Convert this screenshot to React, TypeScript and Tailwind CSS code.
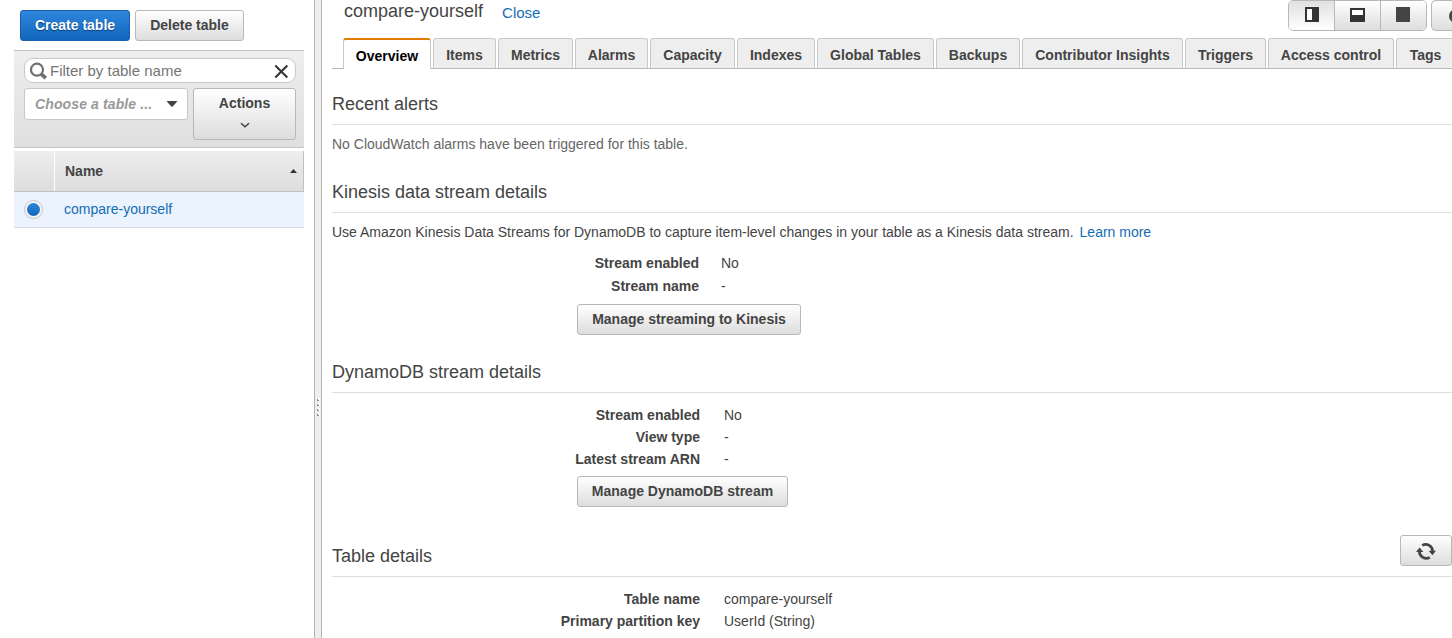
import React from 'react';

const tabs: [string, string][] = [
  ['Items', 'w-[63px]'],
  ['Metrics', 'w-[75px]'],
  ['Alarms', 'w-[73px]'],
  ['Capacity', 'w-[85px]'],
  ['Indexes', 'w-[78px]'],
  ['Global Tables', 'w-[117px]'],
  ['Backups', 'w-[84px]'],
  ['Contributor Insights', 'w-[161px]'],
  ['Triggers', 'w-[81px]'],
  ['Access control', 'w-[126px]'],
  ['Tags', 'w-[59px]'],
];

const buttonLook =
  'rounded-[3px] border border-[#b8b8b8] bg-linear-to-b from-white to-[#dddddd] font-bold text-[#444]';

function Button({ children, className }: { children: React.ReactNode; className: string }) {
  return (
    <button className={`${buttonLook} flex shrink-0 items-center justify-center whitespace-nowrap ${className}`}>
      {children}
    </button>
  );
}

function Sidebar() {
  return (
    <aside className="w-[314px] shrink-0 pl-[14px] pt-[10px]">
      <div className="flex gap-[5px] pl-[6px]">
        <button className="flex h-[31px] w-[110px] items-center justify-center rounded-[3px] border border-[#1a5fae] bg-linear-to-b from-[#2e87dd] to-[#1166bb] pb-[2px] font-bold text-white [text-shadow:0_1px_1px_#0a3c78]">
          Create table
        </button>
        <Button className="h-[31px] w-[109px] pb-[2px]">Delete table</Button>
      </div>

      <div className="mt-[9px] h-[98px] w-[290px] border-y border-[#c4c4c4] bg-linear-to-b from-[#eeeeee] to-[#dfdfdf] px-[10px] pt-[7px]">
        <div className="flex h-[25px] w-[272px] items-center rounded-[9px] border border-[#c8c8c8] bg-white pl-[5px] pr-[6px]">
          <svg width="18" height="18" viewBox="0 0 18 18" fill="none" stroke="#707070">
            <circle cx="7" cy="7.7" r="6" strokeWidth="2.2" />
            <path d="M11 11.8 15.8 16.2" strokeWidth="3.6" />
          </svg>
          <span className="ml-[2px] flex-1 text-[15px] text-[#757575]">Filter by table name</span>
          <svg width="16" height="16" viewBox="0 0 16 16" fill="none" stroke="#333" strokeWidth="2">
            <path d="M2.3 2.5 14.3 14.5M14.3 2.5 2.3 14.5" />
          </svg>
        </div>
        <div className="mt-[5px] flex w-[272px] justify-between">
          <div className="flex h-[32px] w-[164px] items-center justify-between rounded-[3px] border border-[#c8c8c8] bg-white pl-[10px] pr-[9px] font-bold italic text-[#999]">
            <span className="tracking-[0.12px]">Choose a table ...</span>
            <svg width="12" height="6" viewBox="0 0 12 6" fill="#444">
              <path d="M.5 0h11L7 5.2q-1 .9-2 0z" />
            </svg>
          </div>
          <Button className="h-[52px] w-[103px] flex-col pb-[4px]">
            <span className="leading-[20px]">Actions</span>
            <svg className="mt-[6px]" width="12" height="12" viewBox="0 0 12 12" fill="none" stroke="#444" strokeWidth="1.5">
              <path d="M2 4.2 6 7.8 10 4.2" />
            </svg>
          </Button>
        </div>
      </div>

      <div className="mt-[3px] flex h-[41px] w-[290px] border-b border-r border-[#c0c0c0] bg-linear-to-b from-[#eeeeee] to-[#dddddd] font-bold text-[#444]">
        <div className="w-[41px] border-r border-white" />
        <div className="flex flex-1 items-center justify-between pl-[10px] pr-[6px]">
          <span>Name</span>
          <svg width="7" height="4" viewBox="0 0 7 4" fill="#333">
            <path d="M0 4 3.5 0 7 4z" />
          </svg>
        </div>
      </div>
      <div className="flex h-[36px] w-[290px] items-center border-b border-[#d5dbe2] bg-[#eaf3fe] pl-[10px]">
        <span className="flex size-[19px] items-center justify-center rounded-full border border-[#c8c8c8] bg-[#f5f5f5]">
          <span className="size-[13px] rounded-full bg-linear-to-b from-[#2e87dd] to-[#1166bb]" />
        </span>
        <a className="ml-[21px] pb-[2px] text-[#146eb4]">compare-yourself</a>
      </div>
    </aside>
  );
}

function Grip() {
  return (
    <div className="h-full w-[8px] shrink-0 border-x border-[#b4b4b4] bg-[#eeeeee] pt-[397px]">
      <svg width="6" height="22" viewBox="0 0 6 22" shapeRendering="crispEdges">
        {[0, 5, 10, 15].map((y) => (
          <g key={y}>
            <path d={`M3 ${y + 1}h2v3h-2z`} fill="#fff" />
            <path d={`M2 ${y + 2}h1v1h1v1h-2z`} fill="#888" />
          </g>
        ))}
      </svg>
    </div>
  );
}

function Heading({ children }: { children: React.ReactNode }) {
  return (
    <h2 className="h-[33px] border-b border-[#dddddd] text-[18px] leading-[24px] text-[#444]">{children}</h2>
  );
}

function Details({ rows, className, row }: { rows: [string, string][]; className: string; row: string }) {
  return (
    <dl className={className}>
      {rows.map(([label, value]) => (
        <div key={label} className={`grid ${row}`}>
          <dt className="text-right font-bold">{label}</dt>
          <dd>{value}</dd>
        </div>
      ))}
    </dl>
  );
}

const segment = 'flex items-center justify-center border-r border-[#b8b8b8] pb-[2px]';

function Header() {
  return (
    <header className="flex h-[38px] justify-between">
      <div className="flex pl-[12px]">
        <h1 className="text-[18px] leading-[22px] text-[#444]">compare-yourself</h1>
        <a className="ml-[19px] text-[15px] leading-[25px] text-[#146eb4]">Close</a>
      </div>
      <div className="flex h-[31px] gap-[4px]">
        <div className="flex w-[139px] overflow-hidden rounded-[5px] border border-[#b8b8b8]">
          <div className={`${segment} w-[46px] bg-linear-to-b from-[#e0e0e0] to-white`}>
            <svg width="14" height="15" viewBox="0 0 14 15" shapeRendering="crispEdges">
              <path d="M0 0h14v15H0z" fill="#333" />
              <path d="M2 2h5v11H2z" fill="#fff" />
            </svg>
          </div>
          <div className={`${segment} w-[46px] bg-linear-to-b from-white to-[#dddddd]`}>
            <svg width="15" height="14" viewBox="0 0 15 14" shapeRendering="crispEdges">
              <path d="M0 0h15v14H0z" fill="#333" />
              <path d="M2 2h11v5H2z" fill="#fff" />
            </svg>
          </div>
          <div className="flex flex-1 items-center justify-center bg-linear-to-b from-white to-[#dddddd] pb-[2px] pr-[2px]">
            <svg width="14" height="15" viewBox="0 0 14 15">
              <path d="M0 0h14v15H0z" fill="#444" />
            </svg>
          </div>
        </div>
        <div className="flex w-[21px] items-center overflow-hidden rounded-l-[5px] border border-r-0 border-[#b8b8b8] bg-linear-to-b from-white to-[#dddddd] pl-[17px]">
          <svg className="shrink-0" width="14" height="14" viewBox="0 0 14 14">
            <circle cx="7" cy="7" r="7" fill="#444" />
          </svg>
        </div>
      </div>
    </header>
  );
}

function Refresh() {
  return (
    <svg width="20" height="18" viewBox="0 0 20 18" fill="none" stroke="#444" strokeWidth="2.7">
      <path d="M6.2 3.4A6.9 6.9 0 0 1 16.6 9.5" />
      <path d="M13.8 15.4A6.9 6.9 0 0 1 3.4 9.3" />
      <path d="M12.6 8.8H20l-3.6 4.4zM0 10h7.4L3.6 5.6z" fill="#444" stroke="none" />
    </svg>
  );
}

export default function App() {
  return (
    <div className="flex h-[638px] w-[1452px] overflow-hidden bg-white font-['Liberation_Sans',Arial,sans-serif] text-[14px] leading-[20px] text-[#444]">
      <Sidebar />
      <Grip />
      <main className="min-w-0 flex-1 pl-[10px]">
        <Header />
        <nav className="flex h-[31px] items-start gap-[2px] overflow-hidden bg-[linear-gradient(#b8b8b8,#b8b8b8)] bg-[length:100%_1px] bg-bottom bg-no-repeat pl-[11px] font-bold text-[#444]">
          <div className="flex h-[31px] w-[88px] shrink-0 items-center justify-center rounded-t-[3px] border-x border-t-2 border-x-[#c8c8c8] border-t-[#e07b00] bg-white pt-[3px] text-black">
            Overview
          </div>
          {tabs.map(([name, width]) => (
            <div
              key={name}
              className={`${width} flex h-[30px] shrink-0 items-center justify-center rounded-t-[3px] border border-b-0 border-[#c8c8c8] bg-[#eeeeee] pt-[3px]`}
            >
              {name}
            </div>
          ))}
        </nav>

        <section className="pt-[23px]">
          <Heading>Recent alerts</Heading>
          <p className="mt-[9px] text-[#666]">No CloudWatch alarms have been triggered for this table.</p>
        </section>

        <section className="pt-[26px]">
          <Heading>Kinesis data stream details</Heading>
          <p className="mt-[9px]">
            Use Amazon Kinesis Data Streams for DynamoDB to capture item-level changes in your table as a Kinesis data
            stream.<a className="ml-[6px] text-[#146eb4]">Learn more</a>
          </p>
          <Details
            className="mt-[10px] leading-[23px]"
            row="grid-cols-[367px_1fr] gap-[22px]"
            rows={[['Stream enabled', 'No'], ['Stream name', '-']]}
          />
          <Button className="ml-[245px] mt-[6px] h-[31px] w-[224px] pb-[2px]">Manage streaming to Kinesis</Button>
        </section>

        <section className="pt-[25px]">
          <Heading>DynamoDB stream details</Heading>
          <Details
            className="mt-[11px] leading-[22px]"
            row="grid-cols-[368px_1fr] gap-[24px]"
            rows={[['Stream enabled', 'No'], ['View type', '-'], ['Latest stream ARN', '-']]}
          />
          <Button className="ml-[245px] mt-[6px] h-[31px] w-[211px] pb-[2px]">Manage DynamoDB stream</Button>
        </section>

        <section className="pt-[28px]">
          <div className="flex h-[42px] justify-between border-b border-[#dddddd]">
            <h2 className="pt-[9px] text-[18px] leading-[24px] text-[#444]">Table details</h2>
            <Button className="h-[31px] w-[52px] pt-px">
              <Refresh />
            </Button>
          </div>
          <Details
            className="mt-[11px] leading-[22px]"
            row="grid-cols-[368px_1fr] gap-[24px]"
            rows={[['Table name', 'compare-yourself'], ['Primary partition key', 'UserId (String)']]}
          />
        </section>
      </main>
    </div>
  );
}
